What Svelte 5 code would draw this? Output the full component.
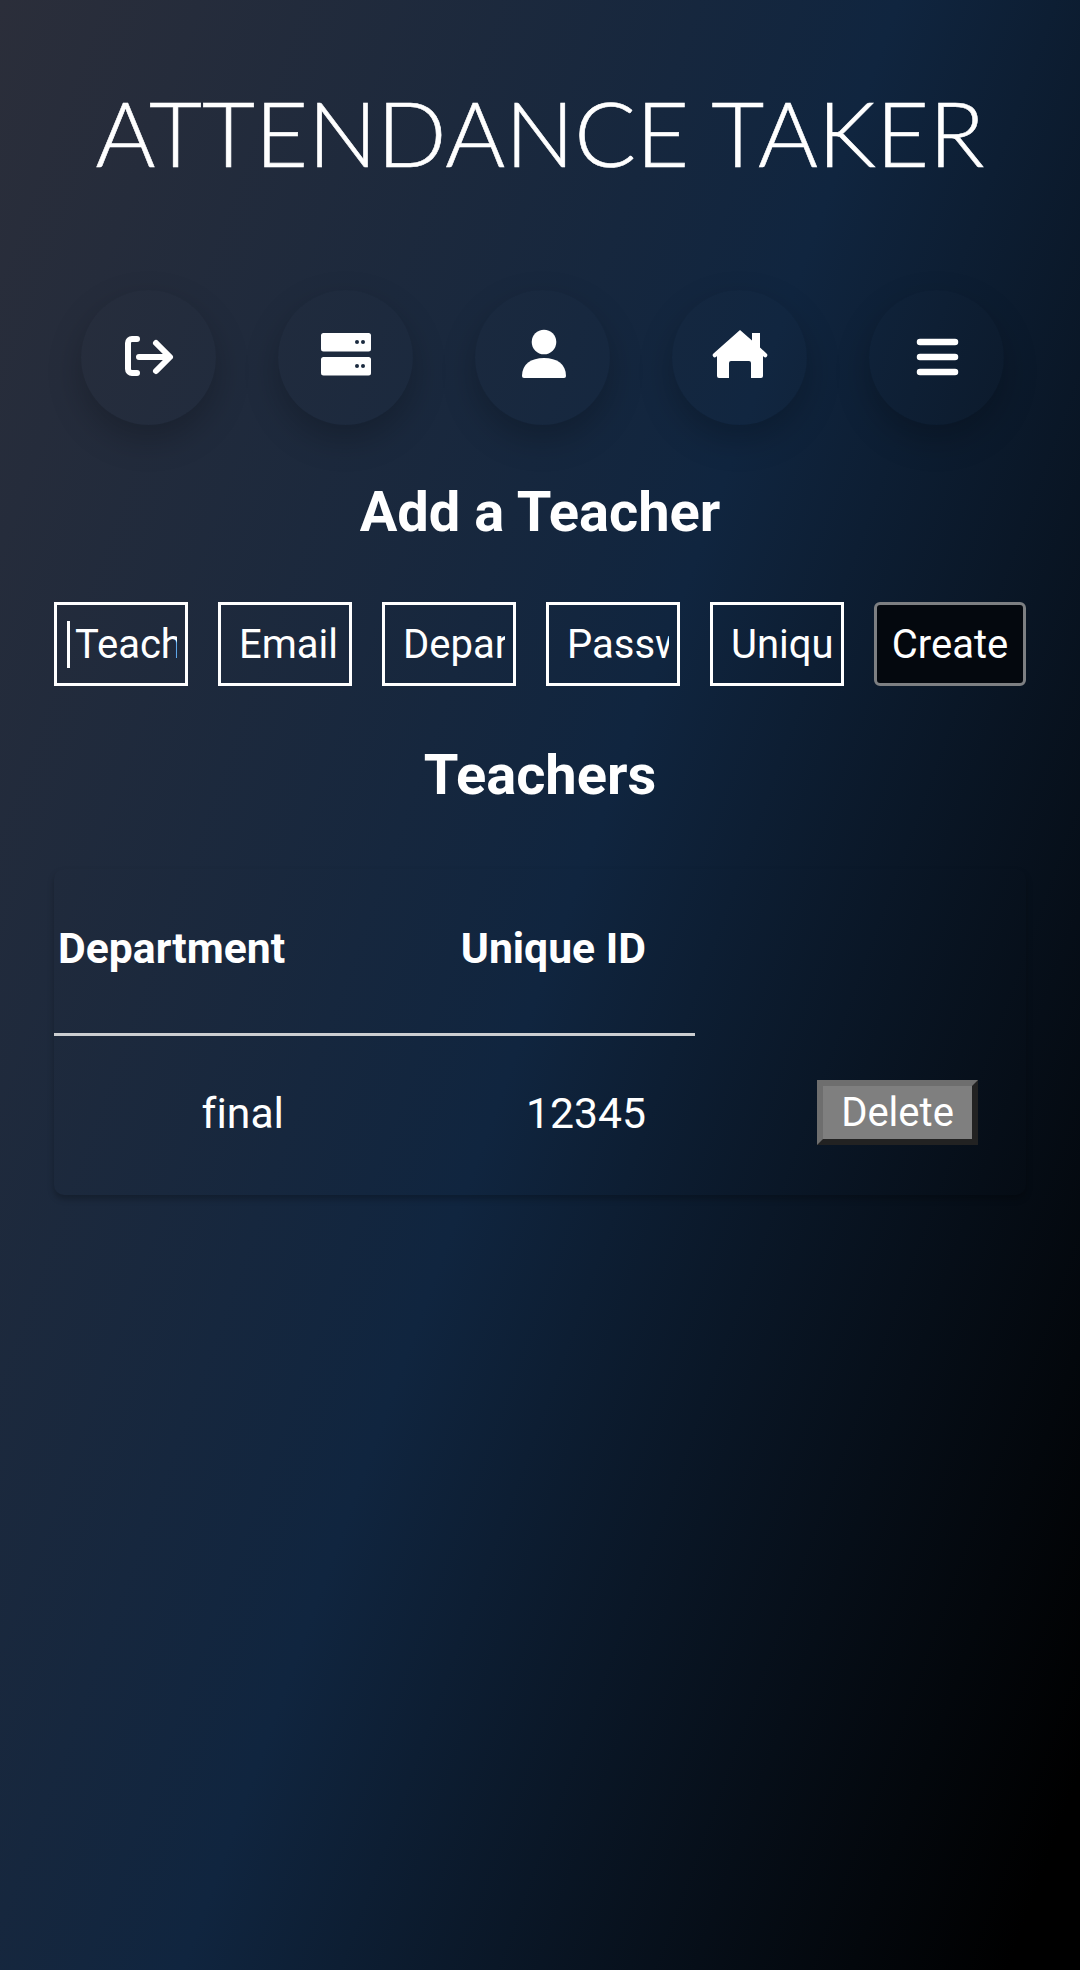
<script>
  let placeholders = ["Teacher Name", "Email", "Department", "Password", "Unique ID"];
  let teachers = [{ department: "final", uid: "12345" }];
</script>

<div class="page">
  <h1 class="title">ATTENDANCE TAKER</h1>

  <nav class="nav">
    <div class="circle">
      <svg width="60" height="60" viewBox="0 0 60 60" fill="none" stroke="#fff" stroke-width="6" stroke-linecap="round" stroke-linejoin="round">
        <path d="M18 11h-5a4 4 0 0 0-4 4v26a4 4 0 0 0 4 4h5" />
        <path d="M20 29h30M37 15l14 14-14 14" />
      </svg>
    </div>
    <div class="circle">
      <svg width="60" height="60" viewBox="0 0 60 60">
        <rect x="5" y="5" width="50" height="18.500" rx="2.500" fill="#fff" />
        <rect x="5" y="29" width="50" height="18.500" rx="2.500" fill="#fff" />
        <g fill="#1a2a3f">
          <circle cx="41" cy="14" r="2" /><circle cx="47" cy="14" r="2" />
          <circle cx="41" cy="38" r="2" /><circle cx="47" cy="38" r="2" />
        </g>
      </svg>
    </div>
    <div class="circle">
      <svg width="60" height="60" viewBox="0 0 60 60" fill="#fff">
        <circle cx="31" cy="14" r="12.300" />
        <path d="M9 48c0-12 9-18 22-18s22 6 22 18a2 2 0 0 1-2 2H11a2 2 0 0 1-2-2z" />
      </svg>
    </div>
    <div class="circle">
      <svg width="60" height="60" viewBox="0 0 60 60" fill="#fff">
        <path d="M30 2l12 10.500V5h8v14.500l6.500 6a2.200 2.200 0 0 1-2.500 3.600L53 28v20a2 2 0 0 1-2 2H41V35a2 2 0 0 0-2-2H21a2 2 0 0 0-2 2v15H9a2 2 0 0 1-2-2V28l-1 1.100a2.200 2.200 0 0 1-2.500-3.600z" />
      </svg>
    </div>
    <div class="circle">
      <svg width="60" height="60" viewBox="0 0 60 60" fill="none" stroke="#fff" stroke-width="6.500" stroke-linecap="round">
        <path d="M13 14h35M13 29h35M13 44h35" />
      </svg>
    </div>
  </nav>

  <h2 class="add-title">Add a Teacher</h2>

  <form class="form">
    {#each placeholders as p, i}
      <div class="field">
        <input type="text" placeholder={p} />
        {#if i === 0}<span class="caret"></span>{/if}
      </div>
    {/each}
    <button type="button" class="create">Create</button>
  </form>

  <h2 class="list-title">Teachers</h2>

  <div class="card">
    <table>
      <colgroup>
        <col class="c1" /><col class="c2" /><col />
      </colgroup>
      <thead>
        <tr>
          <th>Department</th>
          <th>Unique ID</th>
          <th class="blank"></th>
        </tr>
      </thead>
      <tbody>
        {#each teachers as t}
          <tr>
            <td>{t.department}</td>
            <td>{t.uid}</td>
            <td><button type="button" class="delete">Delete</button></td>
          </tr>
        {/each}
      </tbody>
    </table>
  </div>
</div>

<style>
  :global(body) {
    margin: 0;
  }

  .page {
    box-sizing: border-box;
    width: 1080px;
    height: 1970px;
    overflow: hidden;
    padding-top: 77px;
    background: linear-gradient(110deg, #2b2e3a 0%, #10253f 50%, #000 96%);
    color: #fff;
    font-family: Roboto, "Liberation Sans", sans-serif;
  }

  .title {
    margin: 0;
    text-align: center;
    font-family: Lato, "Open Sans", sans-serif;
    font-weight: 300;
    font-size: 91.500px;
    line-height: 110px;
    -webkit-text-stroke: 0.6px #fff;
  }

  .nav {
    display: flex;
    justify-content: space-between;
    padding: 0 76px 0 81px;
    margin-top: 103px;
  }

  .circle {
    width: 135px;
    height: 135px;
    border-radius: 50%;
    display: flex;
    align-items: center;
    justify-content: center;
    background: rgba(255, 255, 255, 0.008);
    box-shadow: 0 14px 34px rgba(0, 0, 0, 0.22);
  }

  .add-title,
  .list-title {
    margin: 0;
    text-align: center;
    font-size: 56px;
    font-weight: 700;
    line-height: 60px;
  }

  .add-title {
    margin-top: 57px;
  }

  .form {
    display: flex;
    gap: 30px;
    padding: 0 54px;
    margin-top: 60px;
  }

  .field {
    position: relative;
  }

  input {
    display: block;
    box-sizing: border-box;
    width: 134px;
    height: 84px;
    padding: 0 8px 0 18px;
    background: transparent;
    border: 3px solid #fff;
    border-radius: 0;
    outline: none;
    color: #fff;
    font-family: inherit;
    font-size: 40px;
  }

  input::placeholder {
    color: #fff;
    opacity: 1;
  }

  .caret {
    position: absolute;
    left: 13px;
    top: 19px;
    width: 3px;
    height: 47px;
    background: #fff;
  }

  .create {
    box-sizing: border-box;
    width: 152px;
    height: 84px;
    padding: 0;
    background: #04080e;
    border: 3px solid #7d7f82;
    border-radius: 6px;
    color: #fff;
    font-family: inherit;
    font-size: 40px;
  }

  .list-title {
    margin-top: 59px;
  }

  .card {
    margin: 64px 54px 0;
    border-radius: 10px;
    box-shadow: 0 4px 6px rgba(0, 0, 0, 0.25);
    overflow: hidden;
  }

  table {
    width: 100%;
    table-layout: fixed;
    border-collapse: collapse;
    font-size: 42.700px;
    font-variant-ligatures: none;
  }

  .c1 {
    width: 279px;
  }

  .c2 {
    width: 362px;
  }

  th {
    height: 157.500px;
    padding: 0 49px 6px 0;
    text-align: right;
    font-weight: 700;
    border-bottom: 3px solid #ccced1;
    white-space: nowrap;
  }

  th:first-child {
    padding-left: 4px;
    text-align: left;
  }

  th.blank {
    border-bottom: none;
  }

  td {
    height: 155px;
    padding: 0 49px 4px 0;
    text-align: right;
  }

  td:last-child {
    padding-right: 48px;
  }

  .delete {
    box-sizing: border-box;
    width: 161px;
    height: 65px;
    padding: 0;
    background: #7f7f7f;
    border: 6px solid;
    border-color: #6e6e6e #222 #222 #6e6e6e;
    color: #fff;
    font-family: inherit;
    font-size: 40px;
    vertical-align: middle;
  }
</style>
